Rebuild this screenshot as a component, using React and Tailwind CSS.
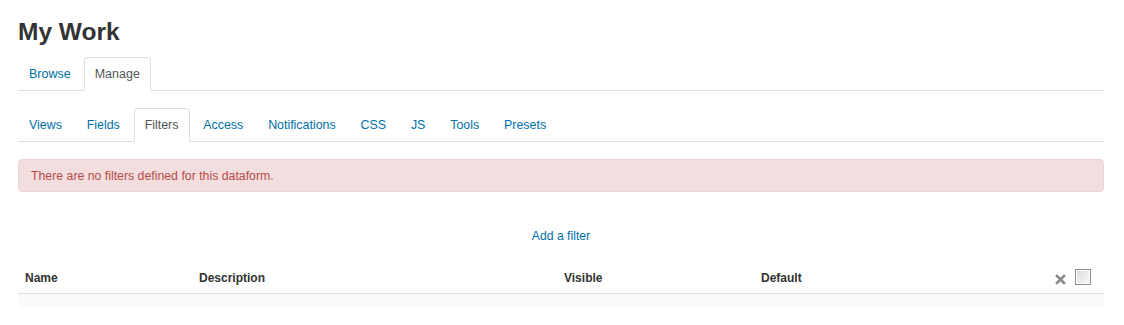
export default function App() {
  const tabs2 = ["Views", "Fields", "Filters", "Access", "Notifications", "CSS", "JS", "Tools", "Presets"];
  return (
    <div className="bg-white min-h-[325px] text-[13px] text-[#333]" style={{ fontFamily: '"Liberation Sans", Arial, sans-serif' }}>
      <div className="ml-[18px] w-[1086px] pt-[17px]">
        <h2 className="text-[24.5px] leading-[30px] font-bold text-[#333]">My Work</h2>
        <ul className="mt-[10px] flex border-b border-[#ddd] text-[12.5px]">
          {["Browse", "Manage"].map((t) => (
            <li key={t} className="-mb-px mr-[2px]">
              <span
                className={
                  "block px-[10px] pt-[7px] pb-[7px] leading-[18px] border rounded-t-[4px] " +
                  (t === "Manage" ? "border-[#ddd] border-b-white bg-white text-[#555]" : "border-transparent text-[#0070a8]")
                }
              >
                {t}
              </span>
            </li>
          ))}
        </ul>
        <ul className="mt-[17px] flex border-b border-[#ddd] text-[12.4px]">
          {tabs2.map((t) => (
            <li key={t} className="-mb-px mr-[2px]">
              <span
                className={
                  "block pl-[10px] pr-[10.9px] pt-[7px] pb-[7px] leading-[18px] border rounded-t-[4px] " +
                  (t === "Filters" ? "border-[#ddd] border-b-white bg-white text-[#555]" : "border-transparent text-[#0070a8]")
                }
              >
                {t}
              </span>
            </li>
          ))}
        </ul>
        <div className="mt-[17px] border border-[#eed3d7] bg-[#f2dede] rounded-[4px] pl-[12px] pt-[8px] pb-[6px] leading-[17px] text-[12.3px] text-[#b94a48]">
          There are no filters defined for this dataform.
        </div>
        <div className="mt-[35px] text-center leading-[18px] text-[12.2px] text-[#0070a8]">Add a filter</div>
        <div className="mt-[16px]">
          <div className="flex border-b border-[#ddd] text-[12px] font-bold text-[#333]">
            <div className="w-[174px] pl-[7px] pt-[8px] pb-[6px] leading-[18px]">Name</div>
            <div className="w-[365px] pl-[7px] pt-[8px] pb-[6px] leading-[18px]">Description</div>
            <div className="w-[197px] pl-[7px] pt-[8px] pb-[6px] leading-[18px]">Visible</div>
            <div className="w-[200px] pl-[7px] pt-[8px] pb-[6px] leading-[18px]">Default</div>
            <div className="flex-1 flex items-start justify-end pr-[13px] pt-[8px]">
              <svg width="11" height="11" viewBox="0 0 11 11" className="mt-[5px] mr-[9px]">
                <path d="M2 2 L9 9 M9 2 L2 9" stroke="#8a8a8a" strokeWidth="2.6" strokeLinecap="square" />
              </svg>
              <span className="block w-[16px] h-[16px] border border-[#8e8e8e] bg-gradient-to-br from-[#dcdcdc] to-[#f8f8f8] shadow-[inset_0_0_0_1px_#fff]" />
            </div>
          </div>
          <div className="h-[13px] bg-[#f9f9f9]" />
        </div>
      </div>
    </div>
  );
}
